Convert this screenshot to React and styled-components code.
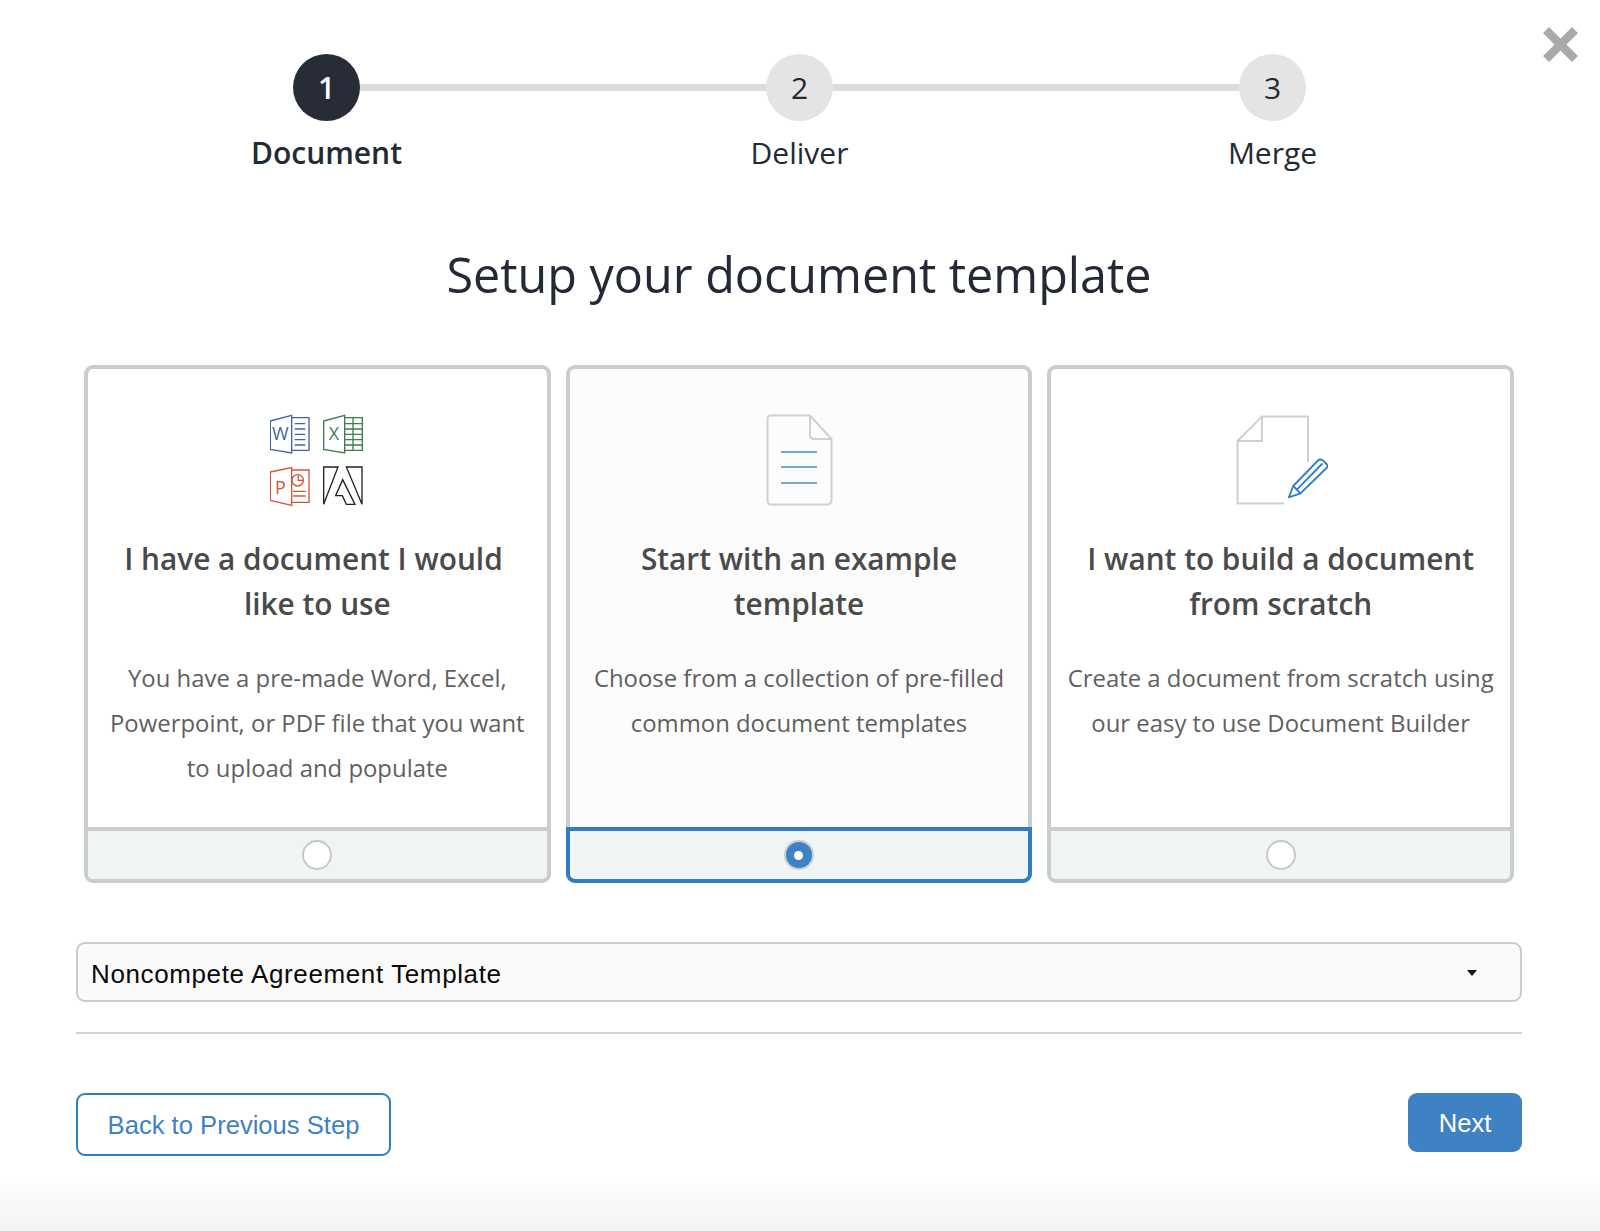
import styled, { createGlobalStyle } from "styled-components";

const GlobalStyle = createGlobalStyle`
  html, body {
    margin: 0;
    padding: 0;
    background: #fff;
  }
  * {
    box-sizing: border-box;
  }
`;

const Page = styled.div`
  position: relative;
  width: 1600px;
  height: 1231px;
  overflow: hidden;
  padding-top: 54px;
  font-family: "Open Sans", sans-serif;
  background: linear-gradient(to bottom, #fff 0, #fff 1175px, #f3f3f3 1231px);
`;

const CloseButton = styled.button`
  position: absolute;
  top: 27px;
  left: 1543px;
  width: 35px;
  height: 35px;
  padding: 0;
  border: 0;
  background: none;
`;

const Stepper = styled.div`
  display: grid;
  grid-template-columns: repeat(3, 473px);
  margin-left: 90px;
`;

const Step = styled.div`
  position: relative;
  display: flex;
  flex-direction: column;
  align-items: center;

  &:not(:last-child)::after {
    content: "";
    position: absolute;
    top: 30px;
    left: 50%;
    width: 100%;
    height: 7px;
    background: #dcdcdc;
  }
`;

const StepCircle = styled.div`
  position: relative;
  z-index: 1;
  width: 67px;
  height: 67px;
  border-radius: 50%;
  display: flex;
  align-items: center;
  justify-content: center;
  font-size: 30px;
  font-weight: ${(p) => (p.$active ? 600 : 400)};
  color: ${(p) => (p.$active ? "#fff" : "#232a35")};
  background: ${(p) => (p.$active ? "#272c37" : "#e4e4e4")};
`;

const StepLabel = styled.div`
  margin-top: 11px;
  font-size: 30px;
  line-height: 42px;
  font-weight: ${(p) => (p.$active ? 600 : 400)};
  color: #232a35;
`;

const Title = styled.h1`
  margin: 66px 0 0;
  padding-right: 2px;
  text-align: center;
  font-size: 48.5px;
  line-height: 68px;
  font-weight: 400;
  color: #232a35;
`;

const Cards = styled.div`
  display: grid;
  grid-template-columns: repeat(3, 1fr);
  gap: 15px;
  margin: 57px 86px 0 84px;
`;

const Card = styled.div`
  height: 518px;
  display: flex;
  flex-direction: column;
  border: 4px solid #c9cdce;
  border-radius: 9px;
  background: ${(p) => (p.$selected ? "#fcfcfc" : "#fff")};
`;

const CardBody = styled.div`
  flex: 1;
  padding: 45px 12px 0;
  text-align: center;
`;

const IconSlot = styled.div`
  height: 95px;
  padding-left: 2px;
  display: flex;
  justify-content: center;
`;

const CardTitle = styled.h2`
  margin: 27px 0 0;
  font-size: 29.8px;
  line-height: 45px;
  font-weight: 600;
  color: #4a4a4a;
`;

const CardText = styled.p`
  margin: 30px 0 0;
  font-size: 23.9px;
  line-height: 44.9px;
  font-weight: 400;
  color: #5f5f5f;
`;

const CardFooter = styled.div`
  height: ${(p) => (p.$selected ? "56px" : "52px")};
  margin: ${(p) => (p.$selected ? "0 -4px -4px" : "0")};
  display: flex;
  align-items: center;
  justify-content: center;
  background: #f1f4f5;
  border-top: 4px solid ${(p) => (p.$selected ? "#2f7dc2" : "#c9cdce")};
  border-left: ${(p) => (p.$selected ? "4px solid #2f7dc2" : "0")};
  border-right: ${(p) => (p.$selected ? "4px solid #2f7dc2" : "0")};
  border-bottom: ${(p) => (p.$selected ? "4px solid #2f7dc2" : "0")};
  border-radius: ${(p) => (p.$selected ? "0 0 9px 9px" : "0 0 5px 5px")};
`;

const Radio = styled.span`
  width: 30px;
  height: 30px;
  border-radius: 50%;
  display: flex;
  align-items: center;
  justify-content: center;
  border: ${(p) => (p.$checked ? "2px solid #c9cdce" : "2px solid #c4c8c9")};
  background: ${(p) => (p.$checked ? "#3d82c4" : "#fff")};

  &::after {
    content: "";
    display: ${(p) => (p.$checked ? "block" : "none")};
    width: 9px;
    height: 9px;
    border-radius: 50%;
    background: #fff;
  }
`;

const FormArea = styled.div`
  margin: 59px 78px 0 76px;
`;

const SelectBox = styled.div`
  height: 60px;
  display: flex;
  align-items: center;
  justify-content: space-between;
  padding: 5px 43px 0 13px;
  border: 2px solid #c9cdce;
  border-radius: 9px;
  background: #fafafa;
  font-family: "Liberation Sans", Arial, sans-serif;
  font-size: 26px;
  letter-spacing: 0.62px;
  color: #0a0a0a;
`;

const Caret = styled.span`
  width: 0;
  height: 0;
  border-left: 5px solid transparent;
  border-right: 5px solid transparent;
  border-top: 6px solid #111;
  margin-bottom: 3px;
`;

const Divider = styled.hr`
  margin: 30px 0 0;
  border: 0;
  border-top: 2px solid #d2d5d6;
`;

const Actions = styled.div`
  display: flex;
  justify-content: space-between;
  align-items: flex-start;
  margin-top: 59px;
`;

const BackButton = styled.button`
  width: 315px;
  height: 63px;
  padding: 2px 0 0;
  border: 2px solid #2f7dc2;
  border-radius: 9px;
  background: #fff;
  font-family: "Liberation Sans", Arial, sans-serif;
  font-size: 25.6px;
  color: #3d82c4;
`;

const NextButton = styled.button`
  width: 114px;
  height: 59px;
  padding: 2px 0 0;
  border: 0;
  border-radius: 9px;
  background: #3f82c3;
  font-family: "Liberation Sans", Arial, sans-serif;
  font-size: 25.6px;
  color: #fff;
`;

const CloseIcon = () => (
  <svg width="35" height="35" viewBox="0 0 35 35">
    <path d="M6 0 L17.5 11.5 L29 0 L35 6 L23.5 17.5 L35 29 L29 35 L17.5 23.5 L6 35 L0 29 L11.5 17.5 L0 6 Z" fill="#aaa" />
  </svg>
);

const OfficeIcon = () => (
  <svg width="97" height="95" viewBox="61 41 291 285" fill="none" strokeWidth="4">
    <g stroke="#3f64ac">
      <path d="M62 62 L126 45 V158 L62 147 Z" />
      <path d="M126 52 H178 V150 H126" />
      <path d="M135 70 H167 M135 86 H167 M135 102 H167 M135 118 H167 M135 134 H167" />
    </g>
    <text x="92" y="120" textAnchor="middle" fontFamily="Open Sans" fontWeight="400" fontSize="54" fill="#3f64ac">W</text>
    <g stroke="#3d7e4e">
      <path d="M222 62 L285 45 V158 L222 147 Z" />
      <path d="M285 52 H338 V150 H285" />
      <path d="M285 70 H338 M285 86 H338 M285 102 H338 M285 118 H338 M285 134 H338 M310 52 V150" />
    </g>
    <text x="253" y="120" textAnchor="middle" fontFamily="Open Sans" fontWeight="400" fontSize="54" fill="#3d7e4e">X</text>
    <g stroke="#d2553a">
      <path d="M62 215 L126 202 V315 L62 300 Z" />
      <path d="M126 209 H178 V306 H126" />
      <path d="M130 273 H168 M130 287 H168" />
      <circle cx="144" cy="240" r="17" />
      <path d="M146 225 V240 H162" />
    </g>
    <text x="92" y="280" textAnchor="middle" fontFamily="Open Sans" fontWeight="400" fontSize="54" fill="#d2553a">P</text>
    <g stroke="#222">
      <path d="M222 200 H265 L222 312 Z" />
      <path d="M290 200 H337 V312 Z" />
      <path d="M279 238 L316 312 H290 L278 286 H258 Z" />
    </g>
  </svg>
);

const TemplateIcon = () => (
  <svg width="67" height="92" viewBox="0 0 67 92" fill="none">
    <path d="M5 1.5 H44 L65.5 25 V86 Q65.5 90.5 61 90.5 H5 Q1.5 90.5 1.5 86 V5 Q1.5 1.5 5 1.5 Z" stroke="#cfd2d3" strokeWidth="2" />
    <path d="M44 1.5 V21 Q44 25 48 25 H65.5" stroke="#cfd2d3" strokeWidth="2" />
    <path d="M15 38 H51 M15 53 H51 M15 69 H51" stroke="#4a8ac9" strokeWidth="1.5" />
  </svg>
);

const ScratchIcon = () => (
  <svg width="93" height="92" viewBox="-1 -1 93 92" fill="none">
    <path d="M72 47 V1.5 H26 L1.5 26 V88.5 H48" stroke="#cdd0d1" strokeWidth="2" />
    <path d="M26 1.5 V26 H1.5" stroke="#cdd0d1" strokeWidth="2" />
    <path d="M52.8 82.3 L57.2 71 L82 45.5 Q84 43.5 87 45.5 L90.5 49 Q92.5 51.5 90.5 53 L64.5 78.3 Z" stroke="#2f7dc2" strokeWidth="1.8" strokeLinejoin="round" />
    <path d="M57.2 71 L64.5 78.3 M60.8 74.6 L86.5 48.5" stroke="#2f7dc2" strokeWidth="1.8" />
  </svg>
);

const steps = [
  { n: 1, label: "Document", active: true },
  { n: 2, label: "Deliver" },
  { n: 3, label: "Merge" },
];

const cards = [
  {
    icon: <OfficeIcon />,
    title: ["I have a document I would\u00a0", "like to use"],
    text: ["You have a pre-made Word, Excel,", "Powerpoint, or PDF file that you want", "to upload and populate"],
  },
  {
    icon: <TemplateIcon />,
    title: ["Start with an example", "template"],
    text: ["Choose from a collection of pre-filled", "common document templates"],
    selected: true,
  },
  {
    icon: <ScratchIcon />,
    title: ["I want to build a document", "from scratch"],
    text: ["Create a document from scratch using", "our easy to use Document Builder"],
  },
];

const App = () => {
  return (
    <Page>
      <GlobalStyle />
      <CloseButton aria-label="Close">
        <CloseIcon />
      </CloseButton>

      <Stepper>
        {steps.map((step) => (
          <Step key={step.n}>
            <StepCircle $active={step.active}>{step.n}</StepCircle>
            <StepLabel $active={step.active}>{step.label}</StepLabel>
          </Step>
        ))}
      </Stepper>

      <Title>Setup your document template</Title>

      <Cards>
        {cards.map((card) => (
          <Card key={card.title[0]} $selected={card.selected}>
            <CardBody>
              <IconSlot>{card.icon}</IconSlot>
              <CardTitle>
                {card.title[0]}
                <br />
                {card.title[1]}
              </CardTitle>
              <CardText>
                {card.text.map((line) => (
                  <span key={line}>
                    {line}
                    <br />
                  </span>
                ))}
              </CardText>
            </CardBody>
            <CardFooter $selected={card.selected}>
              <Radio $checked={card.selected} />
            </CardFooter>
          </Card>
        ))}
      </Cards>

      <FormArea>
        <SelectBox>
          Noncompete Agreement Template
          <Caret />
        </SelectBox>
        <Divider />
        <Actions>
          <BackButton>Back to Previous Step</BackButton>
          <NextButton>Next</NextButton>
        </Actions>
      </FormArea>
    </Page>
  );
};

export default App;
